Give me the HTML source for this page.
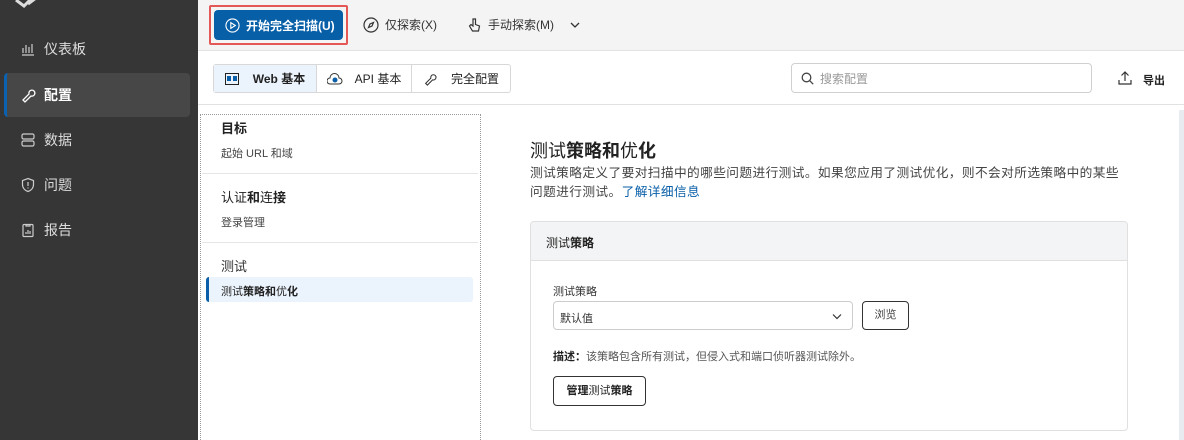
<!DOCTYPE html>
<html><head><meta charset="utf-8"><style>
*{box-sizing:border-box;margin:0;padding:0}
html,body{width:1184px;height:440px;overflow:hidden}
body{font-family:"Liberation Sans","Noto Sans CJK SC",sans-serif;background:#fff;position:relative;color:#222}
.abs{position:absolute}
.side{left:0;top:0;width:198px;height:440px;background:#363636}
.nav{left:0;width:198px;height:44px;color:#ddd;font-size:14px;display:flex;align-items:center;padding-left:20px;gap:8px}
.nav svg{width:16px;height:16px}
.top{left:198px;top:0;width:986px;height:51px;background:#f4f4f5;border-bottom:1px solid #e2e2e2}
.tb{font-size:12px;color:#333;display:flex;align-items:center;gap:6px}
</style></head><body>
<div class="abs side"></div>
<svg class="abs" style="left:14px;top:-6px" width="40" height="14"><path d="M2 6 L10 12 L20 2 M14 10 L22 4" stroke="#ddd" stroke-width="3" fill="none"/></svg>
<div class="abs nav" style="top:27px"><svg viewBox="0 0 16 16" fill="none" stroke="#ccc" stroke-width="1.2"><path d="M2 14h12M3 12V7M6 12V4M9 12V6M12 12V3"/></svg>仪表板</div>
<div class="abs" style="left:4px;top:73px;width:186px;height:44px;background:#474747;border-radius:4px;border-left:3px solid #0a62b0"></div>
<div class="abs nav" style="top:73px;color:#fff;font-weight:bold"><svg viewBox="0 0 16 16" fill="none" stroke="#fff" stroke-width="1.3"><path d="M3 13l6-6a3 3 0 1 1 2 2l-6 6z"/></svg>配置</div>
<div class="abs nav" style="top:118px"><svg viewBox="0 0 16 16" fill="none" stroke="#ccc" stroke-width="1.2"><rect x="2" y="2" width="12" height="5" rx="1.5"/><rect x="2" y="9" width="12" height="5" rx="1.5"/></svg>数据</div>
<div class="abs nav" style="top:163px"><svg viewBox="0 0 16 16" fill="none" stroke="#ccc" stroke-width="1.2"><path d="M8 1.5l5.5 2v4c0 3.5-2.5 6-5.5 7-3-1-5.5-3.5-5.5-7v-4z M8 5v4M8 10.5v1"/></svg>问题</div>
<div class="abs nav" style="top:208px"><svg viewBox="0 0 16 16" fill="none" stroke="#ccc" stroke-width="1.2"><rect x="3" y="2.5" width="10" height="12" rx="1"/><path d="M6 2v2h4V2M6 12V10M8 12V8M10 12V9"/></svg>报告</div>

<div class="abs top"></div>
<div class="abs" style="left:209px;top:5px;width:139px;height:40px;border:2px solid #e45757;border-radius:2px"></div>
<div class="abs tb" style="left:214px;top:10px;width:129px;height:30px;background:#075fa8;border-radius:4px;color:#fff;font-weight:bold;padding-left:11px">
<svg width="15" height="15" viewBox="0 0 16 16" fill="none" stroke="#fff" stroke-width="1.2"><circle cx="8" cy="8" r="7"/><path d="M6.2 5v6l4.8-3z"/></svg>开始完全扫描(U)</div>
<div class="abs tb" style="left:363px;top:16px"><svg width="16" height="16" viewBox="0 0 16 16" fill="none" stroke="#333" stroke-width="1.2"><circle cx="8" cy="8" r="7"/><path d="M10.5 5.5L9 9 5.5 10.5 7 7z"/></svg>仅探索(X)</div>
<div class="abs tb" style="left:466px;top:16px"><svg width="16" height="16" viewBox="0 0 16 16" fill="none" stroke="#333" stroke-width="1.2"><path d="M7 2v7L5 7.5 3.5 9l3 5h6l1-5-4-1.5V2z"/></svg>手动探索(M)</div>
<svg class="abs" style="left:570px;top:21px" width="10" height="8" fill="none" stroke="#333" stroke-width="1.3"><path d="M1 2l4 4 4-4"/></svg>

<div class="abs" style="left:198px;top:104px;width:986px;height:1px;background:#e2e2e2"></div>
<div class="abs" style="left:213px;top:64px;width:298px;height:29px;border:1px solid #d8d8d8;border-radius:3px;display:flex;font-size:12px">
<div style="width:103px;background:#ebf3fc;border-right:1px solid #d8d8d8;display:flex;align-items:center;justify-content:center;gap:14px;font-weight:bold"><svg width="14" height="12"><rect x="0.5" y="0.5" width="13" height="11" fill="none" stroke="#222"/><rect x="2" y="3" width="4" height="5" fill="#0a5fa8"/><rect x="8" y="3" width="4" height="5" fill="#0a5fa8"/></svg>Web 基本</div>
<div style="width:95px;border-right:1px solid #d8d8d8;display:flex;align-items:center;justify-content:center;gap:12px"><svg width="16" height="12"><path d="M3 11a3 3 0 0 1 0-6 4.5 4.5 0 0 1 9 0 3 3 0 0 1 0 6z" fill="none" stroke="#333"/><circle cx="8" cy="7" r="2.5" fill="#0a5fa8"/></svg>API 基本</div>
<div style="flex:1;display:flex;align-items:center;justify-content:center;gap:14px"><svg width="14" height="14" viewBox="0 0 16 16" fill="none" stroke="#333" stroke-width="1.2"><path d="M3 13l6-6a3 3 0 1 1 2 2l-6 6z"/></svg>完全配置</div></div>
<div class="abs" style="left:791px;top:63px;width:301px;height:30px;border:1px solid #d0d0d0;border-radius:4px;font-size:12px;color:#999;display:flex;align-items:center;padding-left:9px;gap:6px"><svg width="13" height="13" fill="none" stroke="#444" stroke-width="1.3"><circle cx="5.5" cy="5.5" r="4.3"/><path d="M8.7 8.7l3.5 3.5"/></svg>搜索配置</div>
<svg class="abs" style="left:1118px;top:70px" width="14" height="16" fill="none" stroke="#333" stroke-width="1.2"><path d="M7 11V2M3.5 5.5L7 2l3.5 3.5M1 10v4h12v-4"/></svg>
<div class="abs" style="left:1143px;top:72px;font-size:11px;font-weight:bold">导出</div>

<div class="abs" style="left:200px;top:114px;width:281px;height:326px;border:1px dotted #999;border-bottom:none"></div>
<div class="abs" style="left:221px;top:118px;font-size:13px;font-weight:bold">目标</div>
<div class="abs" style="left:221px;top:145px;font-size:11px;color:#444">起始 URL 和域</div>
<div class="abs" style="left:202px;top:173px;width:276px;height:1px;background:#e6e6e6"></div>
<div class="abs" style="left:221px;top:187px;font-size:13px">认证<b>和</b>连<b>接</b></div>
<div class="abs" style="left:221px;top:214px;font-size:11px;color:#444">登录管理</div>
<div class="abs" style="left:202px;top:242px;width:276px;height:1px;background:#e6e6e6"></div>
<div class="abs" style="left:221px;top:256px;font-size:13px;color:#333">测试</div>
<div class="abs" style="left:206px;top:277px;width:267px;height:25px;background:#ebf3fc;border-left:3px solid #0a5fa8;border-radius:3px"></div>
<div class="abs" style="left:221px;top:283px;font-size:11px">测试<b>策略和</b>优<b>化</b></div>

<div class="abs" style="left:530px;top:137px;font-size:18px">测试<b>策略和</b>优<b>化</b></div>
<div class="abs" style="left:530px;top:164px;width:640px;font-size:12.7px;letter-spacing:0.4px;line-height:19px;color:#444;white-space:nowrap">测试策略定义了要对扫描中的哪些问题进行测试。如果您应用了测试优化，则不会对所选策略中的某些<br>问题进行测试。<span style="color:#0a5fa8">了解详细信息</span></div>
<div class="abs" style="left:1179px;top:110px;width:5px;height:330px;background:#e8ecf0"></div>

<div class="abs" style="left:530px;top:221px;width:598px;height:210px;border:1px solid #e0e0e0;border-radius:4px;overflow:hidden">
<div style="height:39px;background:#f3f4f5;border-bottom:1px solid #e0e0e0;font-size:12px;padding:12px 0 0 15px">测试<b>策略</b></div></div>
<div class="abs" style="left:553px;top:283px;font-size:11px;color:#333">测试策略</div>
<div class="abs" style="left:553px;top:301px;width:300px;height:29px;border:1px solid #ccc;border-radius:4px;font-size:11px;padding:8px 0 0 6px;color:#333">默认值<svg style="position:absolute;right:10px;top:11px" width="10" height="7" fill="none" stroke="#333" stroke-width="1.2"><path d="M1 1.5l4 4 4-4"/></svg></div>
<div class="abs" style="left:862px;top:301px;width:47px;height:29px;border:1px solid #333;border-radius:4px;font-size:11px;text-align:center;line-height:27px;color:#444">浏览</div>
<div class="abs" style="left:553px;top:348px;font-size:11px;color:#555"><b style="color:#222">描述：</b>该策略包含所有测试，但侵入式和端口侦听器测试除外。</div>
<div class="abs" style="left:553px;top:376px;width:93px;height:30px;border:1px solid #333;border-radius:4px;font-size:11px;text-align:center;line-height:28px"><b>管理</b>测试<b>策略</b></div>
</body></html>
